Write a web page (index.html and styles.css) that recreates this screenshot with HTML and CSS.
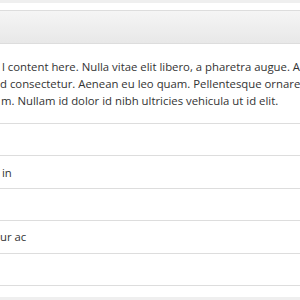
FILE: index.html
```html
<!DOCTYPE html>
<html>
<head>
<meta charset="utf-8">
<link rel="stylesheet" href="styles.css">
</head>
<body>
<div class="top-strip"></div>
<div class="panel">
  <div class="panel-heading"></div>
  <div class="panel-body">
    <div class="line line-1">l content here. Nulla vitae elit libero, a pharetra augue. A</div>
    <div class="line line-2">d consectetur. Aenean eu leo quam. Pellentesque ornare</div>
    <div class="line line-3">m. Nullam id dolor id nibh ultricies vehicula ut id elit.</div>
  </div>
  <ul class="list-group">
    <li class="item"></li>
    <li class="item"><span class="frag frag-in">in</span></li>
    <li class="item"></li>
    <li class="item"><span class="frag frag-ac">ur ac</span></li>
    <li class="item"></li>
  </ul>
</div>
<div class="bottom-strip"></div>
</body>
</html>
```

FILE: styles.css
```css
html, body {
  margin: 0;
  padding: 0;
  background: #ffffff;
}
body {
  width: 300px;
  height: 300px;
  overflow: hidden;
  font-family: "Open Sans", "Noto Sans", sans-serif;
  font-size: 11.35px;
  line-height: 17px;
  color: #333333;
}
.top-strip {
  height: 3px;
  background: #efefef;
}
.panel {
  margin-top: 7px;
  border-top: 1px solid #dddddd;
  border-bottom: 1px solid #dddddd;
}
.panel-heading {
  height: 32px;
  background: linear-gradient(to bottom, #f5f5f5, #e8e8e8);
  border-bottom: 1px solid #dddddd;
}
.panel-body {
  padding: 14px 0 14px 0;
}
.line {
  white-space: nowrap;
}
.line-1 { padding-left: 2px; }
.line-2 { padding-left: 0; }
.line-3 { padding-left: 1px; }
.list-group {
  list-style: none;
  margin: 0;
  padding: 0;
}
.item {
  height: 31.4px;
  border-top: 1px solid #dddddd;
  display: flex;
  align-items: center;
  white-space: nowrap;
}
.frag-in { padding-left: 2px; }
.frag-ac { padding-left: 0; }
.bottom-strip {
  margin-top: 11px;
  height: 4px;
  background: #efefef;
}
```
